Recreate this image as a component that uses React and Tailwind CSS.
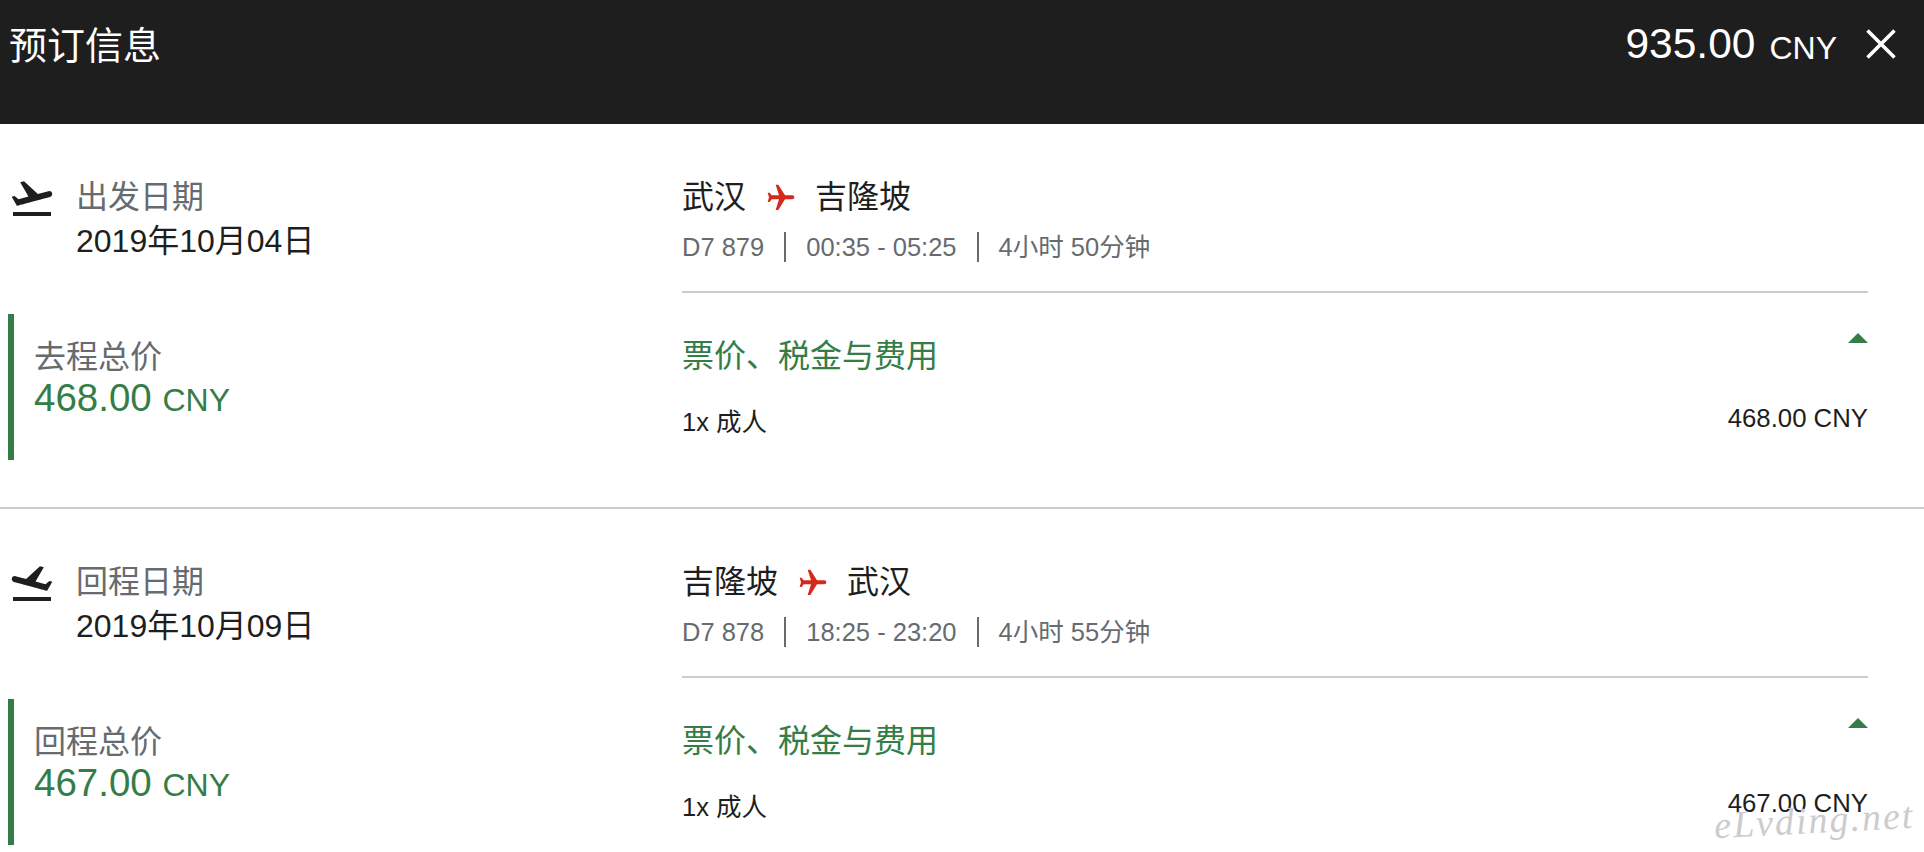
const takeoffIcon =
  "M2.5 19h19v2h-19zm19.57-9.36c-.21-.8-1.04-1.28-1.84-1.06L14.92 10l-6.9-6.43-1.93.51 4.14 7.17-4.97 1.33-1.97-1.54-1.45.39 2.59 4.49s7.12-1.9 16.57-4.43c.81-.23 1.28-1.05 1.07-1.85z";

const trips = [
  {
    label: "出发日期",
    date: "2019年10月04日",
    iconClass: "h-12 w-12 shrink-0",
    from: "武汉",
    to: "吉隆坡",
    flight: "D7 879",
    time: "00:35 - 05:25",
    duration: "4小时 50分钟",
    totalLabel: "去程总价",
    total: "468.00",
  },
  {
    label: "回程日期",
    date: "2019年10月09日",
    iconClass: "h-12 w-12 shrink-0 -scale-x-100",
    from: "吉隆坡",
    to: "武汉",
    flight: "D7 878",
    time: "18:25 - 23:20",
    duration: "4小时 55分钟",
    totalLabel: "回程总价",
    total: "467.00",
  },
];

function Trip({ trip, last }) {
  return (
    <section className={last ? "flex h-[344px] pt-[50px]" : "flex h-[385px] border-b-2 border-[#cccccc] pt-[50px]"}>
      {/* left column */}
      <div className="w-[682px] shrink-0">
        <div className="flex pl-2">
          <svg className={trip.iconClass} viewBox="0 0 24 24" fill="#1e1e1e">
            <path d={takeoffIcon} />
          </svg>
          <div className="ml-[20px]">
            <div className="h-[46px] text-[32px] leading-[46px] text-[#666b70]">{trip.label}</div>
            <div className="text-[32px] leading-[42px] text-[#1e1e1e]">{trip.date}</div>
          </div>
        </div>
        <div className="mt-[52px] ml-2 h-[146px] border-l-[6px] border-[#357d47] pl-[20px] pt-[22px]">
          <div className="text-[32px] leading-[42px] text-[#666b70]">{trip.totalLabel}</div>
          <div className="mt-[-3px] text-[38.5px] leading-[46px] text-[#357d47]">
            {trip.total} <span className="text-[32px]">CNY</span>
          </div>
        </div>
      </div>

      {/* right column */}
      <div className="mr-[56px] flex-1">
        <div className="flex h-[46px] items-center text-[32px] leading-[46px] text-[#1e1e1e]">
          <span>{trip.from}</span>
          <svg className="ml-[19px] mr-[18px] mt-[2px] h-8 w-8 rotate-90" viewBox="0 0 24 24" fill="#d42a1c">
            <path d="M21 16v-2l-8-5V3.5c0-.83-.67-1.5-1.5-1.5S10 2.67 10 3.5V9l-8 5v2l8-2.5V19l-2 1.5V22l3.5-1 3.5 1v-1.5L13 19v-5.5l8 2.5z" />
          </svg>
          <span>{trip.to}</span>
        </div>
        <div className="mt-[11px] flex h-[32px] items-center text-[25.5px] text-[#666b70]">
          <span>{trip.flight}</span>
          <span className="mx-[20px] h-[30px] w-[2px] bg-[#666b70]"></span>
          <span>{trip.time}</span>
          <span className="mx-[20px] h-[30px] w-[2px] bg-[#666b70]"></span>
          <span>{trip.duration}</span>
        </div>
        <div className="mt-[28px] h-[2px] bg-[#cccccc]"></div>
        <div className="mt-[42px] flex items-start justify-between">
          <span className="text-[32px] leading-[42px] text-[#357d47]">票价、税金与费用</span>
          <span className="mt-[-2px] h-0 w-0 border-x-[10px] border-b-[10px] border-x-transparent border-b-[#357d47]"></span>
        </div>
        <div className="mt-[27px] flex items-start justify-between text-[#1e1e1e]">
          <span className="text-[25.5px] leading-[36px]">1x 成人</span>
          <span className="mt-[-4px] text-[25.75px] leading-[36px]">{trip.total} CNY</span>
        </div>
      </div>
    </section>
  );
}

export default function App() {
  return (
    <div className="relative h-[852px] overflow-hidden bg-white font-['Liberation_Sans','Noto_Sans_CJK_SC',sans-serif]">
      <header className="flex h-[124px] items-start justify-between bg-[#1e1e1e] text-white">
        <h1 className="ml-[9px] mt-[23px] text-[38px] font-normal leading-[46px]">预订信息</h1>
        <div className="mr-[28px] mt-[19px] flex items-center">
          <span className="text-[42.5px] leading-[50px]">935.00</span>
          <span className="ml-[14px] mt-[8px] text-[32px] leading-[40px]">CNY</span>
          <svg className="ml-[29px] h-[30px] w-[30px]" viewBox="0 0 30 30" stroke="white" strokeWidth="3.6" fill="none">
            <path d="M1.5 1.5l27 27M28.5 1.5l-27 27" />
          </svg>
        </div>
      </header>

      {trips.map((trip, i) => (
        <Trip key={trip.flight} trip={trip} last={i === trips.length - 1} />
      ))}

      {/* watermark */}
      <div className="absolute bottom-[12px] right-[10px] -rotate-3 font-['Liberation_Serif',serif] text-[38px] italic leading-[40px] tracking-[2px] text-[#cccccc]">
        eLvding.net
      </div>
    </div>
  );
}
